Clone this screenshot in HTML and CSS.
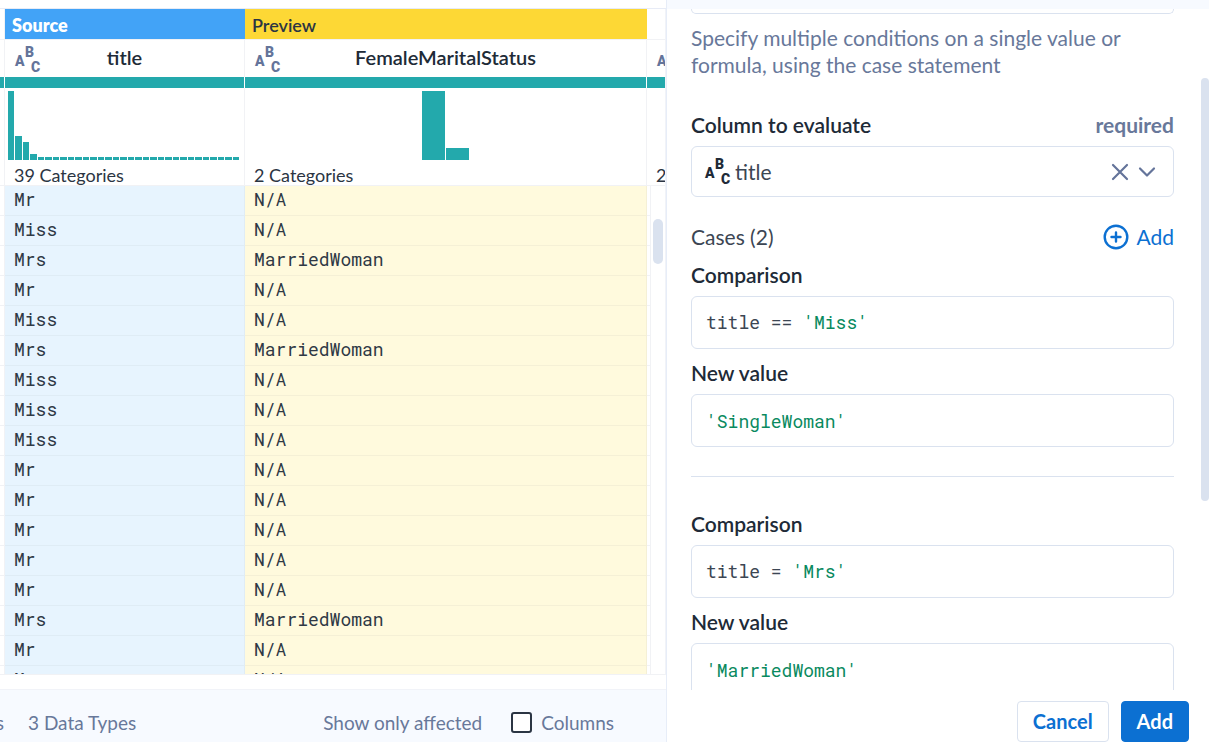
FILE: index.html
```html
<!DOCTYPE html>
<html lang="en">
<head>
<meta charset="utf-8">
<meta name="viewport" content="width=device-width, initial-scale=1">
<title>Case transform</title>
<link rel="stylesheet" href="styles.css">
</head>
<body>
<div class="app">
  <main class="grid-panel">
    <div class="topbar"></div>
    <div class="table-wrap">
      <table class="data">
        <colgroup><col class="col-stub"><col class="col-source"><col><col class="col-next"></colgroup>
        <thead>
          <tr class="band"><td></td><th class="source">Source</th><th class="preview">Preview</th><td></td></tr>
          <tr class="names">
            <td></td>
            <th scope="col"><div class="name"><svg class="abc" viewBox="0 0 26 26" aria-hidden="true"><text x="0" y="19">A</text><text x="10" y="10">B</text><text x="16" y="25">C</text></svg><span>title</span></div></th>
            <th scope="col"><div class="name"><svg class="abc" viewBox="0 0 26 26" aria-hidden="true"><text x="0" y="19">A</text><text x="10" y="10">B</text><text x="16" y="25">C</text></svg><span>FemaleMaritalStatus</span></div></th>
            <td><div class="name"><svg class="abc" viewBox="0 0 26 26" aria-hidden="true"><text x="0" y="19">A</text></svg></div></td>
          </tr>
          <tr class="quality"><td></td><td></td><td></td><td></td></tr>
          <tr class="profile">
            <td></td>
            <td><div class="bars" id="title-bars"></div><p>39 Categories</p></td>
            <td><div class="bars wide"><i style="height:69px"></i><i style="height:12px"></i></div><p>2 Categories</p></td>
            <td><div class="bars"></div><p>2</p></td>
          </tr>
        </thead>
        <tbody id="rows"></tbody>
      </table>
      <div class="track"><div class="thumb"></div></div>
    </div>
    <footer class="status">
      <span class="cut">s</span>
      <span class="types">3 Data Types</span>
      <span class="affected">Show only affected</span>
      <label class="check"><input type="checkbox">Columns</label>
    </footer>
  </main>

  <aside class="side">
    <div class="side-top"></div>
    <div class="scroll">
      <div class="form">
        <div class="prev-field"></div>
        <p class="hint">Specify multiple conditions on a single value or formula, using the case statement</p>
        <div class="label-row"><label class="label" for="column">Column to evaluate</label><span class="required">required</span></div>
        <div class="picker">
          <svg class="abc" viewBox="0 0 26 26" aria-hidden="true"><text x="0" y="19">A</text><text x="10" y="10">B</text><text x="16" y="25">C</text></svg>
          <select id="column"><option>title</option></select>
          <button class="clear" type="button" aria-label="Clear"><svg viewBox="0 0 18 18"><path d="M2 2l14 14M16 2L2 16"/></svg></button>
          <svg class="chevron" viewBox="0 0 18 18" aria-hidden="true"><path d="M2 5.500l7 7 7-7"/></svg>
        </div>
        <div class="cases-row">
          <span>Cases (2)</span>
          <button class="add-case" type="button"><svg viewBox="0 0 26 26"><circle cx="13" cy="13" r="11.300"/><path d="M13 8.500v9M8.500 13h9"/></svg>Add</button>
        </div>
        <section class="case">
          <span class="label" id="cmp1">Comparison</span>
          <div class="code" contenteditable="true" spellcheck="false" role="textbox" aria-labelledby="cmp1">title == <span>'Miss'</span></div>
          <label class="label" for="val1">New value</label>
          <input class="code" id="val1" type="text" spellcheck="false" value="'SingleWoman'">
        </section>
        <hr>
        <section class="case">
          <span class="label" id="cmp2">Comparison</span>
          <div class="code" contenteditable="true" spellcheck="false" role="textbox" aria-labelledby="cmp2">title = <span>'Mrs'</span></div>
          <label class="label" for="val2">New value</label>
          <input class="code" id="val2" type="text" spellcheck="false" value="'MarriedWoman'">
        </section>
      </div>
      <div class="side-thumb"></div>
    </div>
    <div class="actions">
      <button class="btn" type="button">Cancel</button>
      <button class="btn primary" type="button">Add</button>
    </div>
  </aside>
</div>
<script src="app.js"></script>
</body>
</html>
```
FILE: styles.css
```css
* { box-sizing: border-box; }
body {
  margin: 0;
  font: 20px/27px Lato, "Liberation Sans", sans-serif;
  color: #3c4653;
  background: #fff;
}
p { margin: 0; }
button, input, select { font: inherit; color: inherit; margin: 0; }
button { cursor: pointer; }
.abc { width: 26px; height: 26px; flex: none; overflow: visible; fill: currentColor; font: 900 14px/1 Roboto, sans-serif; }

.app { display: grid; grid-template-columns: minmax(0, 1fr) 543px; height: 100vh; overflow: hidden; }

/* Data grid */
.grid-panel { display: flex; flex-direction: column; min-width: 0; min-height: 0; }
.topbar { height: 9px; border-bottom: 1px solid #e7ebf6; }
.table-wrap {
  position: relative;
  flex: 1;
  min-height: 0;
  margin-bottom: 14px;
  overflow: hidden;
  border-right: 1px solid #f1f3f8;
  border-bottom: 1px solid #f1f2f5;
}
.data { width: 100%; table-layout: fixed; border-collapse: separate; border-spacing: 0; }
.data th, .data td { padding: 0; text-align: left; font-weight: 400; border-right: 1px solid #f1f2f5; overflow: hidden; white-space: nowrap; }
.data tr > :last-child { border-right: 0; }
.col-stub { width: 5px; }
.col-source { width: 240px; }
.col-next { width: 18px; }

.band > * { height: 30px; font-size: 18px; line-height: 30px; }
.data .band th { padding: 2px 0 0 7px; line-height: 28px; border-right: 0; }
.data .band .source { background: #42a3f7; color: #fff; font-weight: 800; }
.data .band .preview { background: #fdd835; color: #2b3543; font-weight: 600; }
.names > * { height: 38px; border-top: 1px solid #f1f2f5; }
.name { display: grid; grid-template-columns: 1fr auto 1fr; align-items: center; padding-bottom: 2px; color: #202a37; }
.data .name span { font-weight: 600; }
.name .abc { margin: 5px 0 0 10px; color: #64749a; }
.quality td { height: 11px; background: #23a9ac; }
.data .quality td { border-right-color: #fff; }
.profile td { height: 98px; padding: 0; vertical-align: top; border-bottom: 1px solid #f1f2f5; color: #2b3543; font-size: 18px; }
.profile p { line-height: 25px; padding: 3px 0 0 9px; height: 25px; }
.bars { display: flex; align-items: flex-end; gap: 1px; height: 69px; margin: 3px 5px 0 3px; }
.bars i { flex: 1; background: #23a9ac; }
.bars.wide { justify-content: center; margin-right: 3px; }
.bars.wide i { flex: 0 0 23px; }

.data tbody td {
  height: 30px;
  padding: 0 0 2px 9px;
  border-bottom: 1px solid #f1f2f5;
  font: 18px/27px "Roboto Mono", "Liberation Mono", monospace;
  color: #2f3945;
}
.data tbody td:nth-child(2) { background: #e7f4fe; border-color: #dfecf5; }
.data tbody td:nth-child(3) { background: #fffadd; border-color: #f5f0d6; }

.track { position: absolute; top: 177px; right: 0; bottom: 0; width: 15px; background: #fff; border-left: 1px solid #f1f2f5; }
.thumb { width: 10px; height: 45px; margin: 33px 0 0 2px; border-radius: 5px; background: #dae2ef; }

.status {
  display: flex;
  align-items: center;
  height: 53px;
  padding: 12px 52px 0 0;
  background: #f7faff;
  border-top: 1px solid #f1f3f8;
  color: #68789a;
  font-size: 19px;
  white-space: nowrap;
}
.cut { display: flex; justify-content: flex-end; width: 4px; overflow: hidden; }
.types { margin: 0 auto 0 24px; }
.check { display: flex; align-items: center; gap: 9px; margin-left: 29px; }
.check input { appearance: none; width: 21px; height: 21px; border: 2px solid #2b3543; border-radius: 3px; background: #fff; }
.check input:checked { background: #0c70d2; }

/* Settings panel */
.side { display: flex; flex-direction: column; min-height: 0; border-left: 1px solid #e7edf8; }
.side-top { height: 9px; background: #f7faff; }
.scroll { position: relative; flex: 1; min-height: 0; overflow: hidden; }
.form { padding: 0 35px 0 24px; font-size: 21px; }
.prev-field { height: 5px; border: 1px solid #dae2ef; border-top: 0; border-radius: 0 0 6px 6px; }
.hint { padding: 10px 32px 33px 0; color: #68789a; }
.label-row, .cases-row { display: flex; justify-content: space-between; align-items: center; }
.label { display: block; font-weight: 600; color: #202a37; }
.required { font-weight: 700; color: #68789a; }
.picker {
  display: flex;
  align-items: center;
  height: 51px;
  margin: 8px 0 26px;
  padding: 0 17px 0 13px;
  border: 1px solid #dae2ef;
  border-radius: 6px;
}
.picker .abc { color: #202a37; }
.picker select { flex: 1; height: 49px; padding: 0 0 0 4px; border: 0; background: none; appearance: none; outline: 0; }
.clear { display: flex; padding: 0; border: 0; background: none; }
.clear svg, .chevron { width: 18px; height: 18px; fill: none; stroke: #64749a; stroke-width: 2.2; stroke-linecap: round; stroke-linejoin: round; }
.chevron { margin-left: 9px; }
.cases-row { margin-bottom: 11px; }
.add-case { display: flex; align-items: center; gap: 7px; height: 27px; padding: 0; border: 0; background: none; color: #0c70d2; }
.add-case svg { width: 26px; height: 26px; fill: none; stroke: currentColor; stroke-width: 2.4; stroke-linecap: round; }
.code {
  display: block;
  width: 100%;
  height: 53px;
  margin: 8px 0 10px;
  padding: 0 14px;
  border: 1px solid #dae2ef;
  border-radius: 6px;
  outline: 0;
  background: #fff;
  font: 18px/51px "Roboto Mono", "Liberation Mono", monospace;
  color: #3c4653;
}
.code span, input.code { color: #0a8a5f; }
hr { height: 1px; margin: 29px 0 33px; border: 0; background: #dae2ef; }
.side-thumb { position: absolute; top: 69px; right: 0; width: 8px; height: 423px; border-radius: 4px; background: #dae2ef; }
.actions { display: flex; justify-content: flex-end; gap: 12px; padding: 11px 20px 0; }
.btn { height: 41px; padding: 0 15px; border: 1px solid #dae2ef; border-radius: 4px; background: #fff; color: #0c70d2; font-weight: 700; }
.btn.primary { border-color: #0c70d2; background: #0c70d2; color: #fff; }
```
FILE: app.js
```js
const titles = ["Mr", "Miss", "Mrs", "Mr", "Miss", "Mrs", "Miss", "Miss", "Miss",
  "Mr", "Mr", "Mr", "Mr", "Mr", "Mrs", "Mr", "Mr"];
document.getElementById("rows").innerHTML = titles
  .map(t => `<tr><td></td><td>${t}</td><td>${t === "Mrs" ? "MarriedWoman" : "N/A"}</td><td></td></tr>`)
  .join("");

const heights = [69, 24, 18, 6].concat(Array(27).fill(3));
document.getElementById("title-bars").innerHTML = heights
  .map(h => `<i style="height:${h}px"></i>`)
  .join("");
```
